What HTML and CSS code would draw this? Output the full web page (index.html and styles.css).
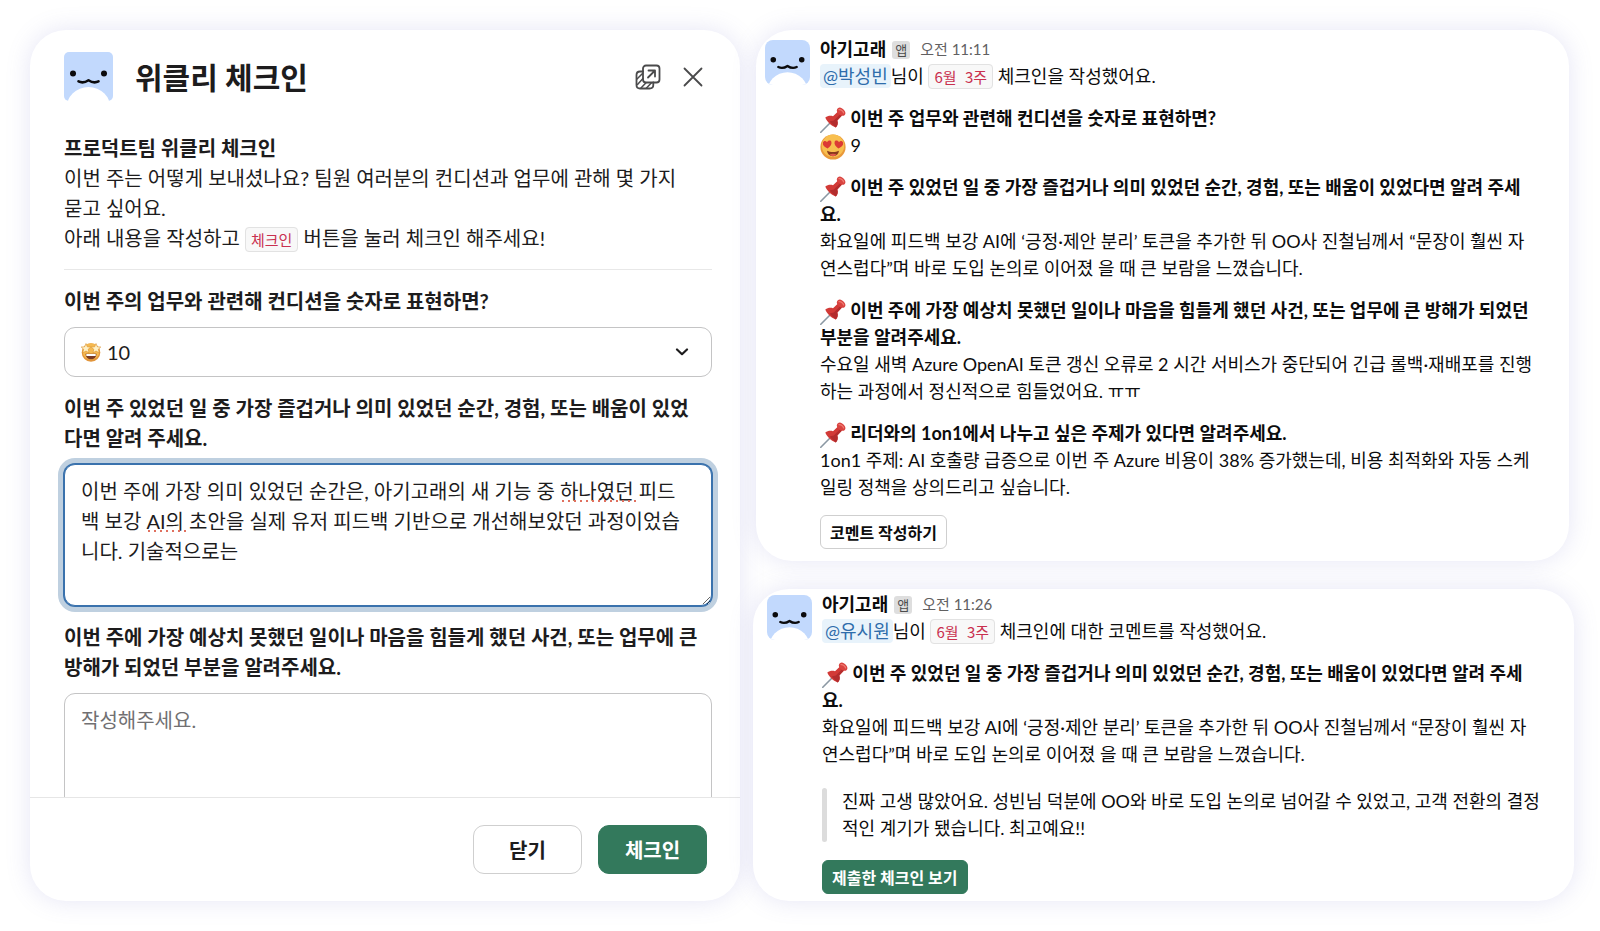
FILE: index.html
```html
<!DOCTYPE html>
<html lang="ko">
<head>
  <meta charset="UTF-8">
  <meta name="viewport" content="width=device-width, initial-scale=1.0">
  <title>위클리 체크인</title>
  <link rel="stylesheet" href="styles.css">
</head>
<body>

<!-- Shared drawings -->
<svg class="symbols" aria-hidden="true">
  <symbol id="whale" viewBox="0 0 49 49">
    <rect width="49" height="49" fill="#c2d9fd"/>
    <circle cx="9" cy="21.5" r="3" fill="#0b0b0d"/>
    <circle cx="40" cy="21.5" r="3" fill="#0b0b0d"/>
    <path d="M14.5 29.4C17 30.6 21 30.6 24.5 28.2C28 30.6 32 30.6 34.5 29.4" fill="none" stroke="#0b0b0d" stroke-width="2.6" stroke-linecap="round" stroke-linejoin="round"/>
    <circle cx="24.5" cy="57.5" r="22.5" fill="#fff"/>
  </symbol>
  <symbol id="pin" viewBox="0 0 26 26">
    <path d="M10.5 15.5L.8 25.2" stroke="#8b98a3" stroke-width="1.6" stroke-linecap="round"/>
    <path d="M5.3 10.6C7.6 8.6 10.6 8.4 13 9.2L18 4.6L22 8.6L17.3 13.4C18.2 16 17.8 18.6 15.8 20.6C11.8 19.2 7 15 5.3 10.6Z" fill="#d23a37"/>
    <path d="M9.5 14.5C11.5 16.8 13.8 18.6 15.8 20.6C17.8 18.6 18.2 16 17.3 13.4L22 8.6L20.4 7L13.8 13.4Z" fill="#b32c2d"/>
    <path d="M16.8 3.2C17.4 .8 19.6 -.1 21.8 1.2C24 2.4 25.6 4.4 25.4 6.4C25.1 8.7 23 9.4 21 8.4C18.8 7.2 16.6 5.2 16.8 3.2Z" fill="#d94340"/>
    <path d="M19 2.7C20.8 2.2 23.2 4.2 23.6 6" fill="none" stroke="#ef7a70" stroke-width="1.2" stroke-linecap="round"/>
  </symbol>
  <symbol id="heart-eyes" viewBox="0 0 26 26">
    <circle cx="13" cy="13" r="12.6" fill="#e9993a"/>
    <circle cx="13" cy="11.8" r="11.2" fill="#f8bf4f"/>
    <path d="M7.6 14.4C4.4 13 2.4 11 2.9 8.7C3.3 6.9 5.8 6.4 7 8.2C8 6.2 10.8 5.9 11.4 7.9C12 10.2 10.2 12.6 7.6 14.4Z" fill="#dc3a35"/>
    <path d="M18.4 14.4C21.6 13 23.6 11 23.1 8.7C22.7 6.9 20.2 6.4 19 8.2C18 6.2 15.2 5.9 14.6 7.9C14 10.2 15.8 12.6 18.4 14.4Z" fill="#dc3a35"/>
    <path d="M7 16.8C10.5 18.4 15.5 18.4 19 16.8C18.6 20.3 16.4 22.2 13 22.2C9.6 22.2 7.4 20.3 7 16.8Z" fill="#8a3a1c"/>
    <path d="M9.5 20.6C11.5 19.4 14.5 19.4 16.5 20.6C15.5 21.7 14.4 22.2 13 22.2C11.6 22.2 10.5 21.7 9.5 20.6Z" fill="#e2574c"/>
  </symbol>
</svg>

<main class="board">

  <!-- Check-in form -->
  <section class="card modal">
    <header class="modal-header">
      <svg class="modal-avatar"><use href="#whale"/></svg>
      <h1>위클리 체크인</h1>
      <button type="button" class="icon-button" aria-label="새 창에서 열기">
        <svg width="26" height="26" viewBox="0 0 26 26" fill="none" stroke="#4a4a4b" stroke-width="1.8" stroke-linecap="round" stroke-linejoin="round">
          <rect x="8" y="1.5" width="16.5" height="17" rx="3"/>
          <path d="M8 7.5H5C2.8 7.5 1.5 9 1.5 11V21C1.5 23.2 3 24.5 5 24.5H14.5C16.8 24.5 18.3 23 18.3 21V18.5"/>
          <path d="M13 13.5L19.5 7M13.5 6.5H20V12.5"/>
          <path d="M2 15L7.5 9.5M2.5 20.5L8 14.5M6 24L11 18.8M11.5 24L16.5 18.8" stroke-width="1.5"/>
        </svg>
      </button>
      <button type="button" class="icon-button close" aria-label="닫기">
        <svg width="20" height="20" viewBox="0 0 20 20" fill="none" stroke="#4a4a4b" stroke-width="1.8" stroke-linecap="round">
          <path d="M1.5 1.5L18.5 18.5M18.5 1.5L1.5 18.5"/>
        </svg>
      </button>
    </header>

    <form class="modal-body" id="checkin-form">
      <div class="intro">
        <strong>프로덕트팀 위클리 체크인</strong>
        <p>이번 주는 어떻게 보내셨나요? 팀원 여러분의 컨디션과 업무에 관해 몇 가지 묻고 싶어요.</p>
        <p>아래 내용을 작성하고 <code>체크인</code> 버튼을 눌러 체크인 해주세요!</p>
      </div>
      <hr>

      <div class="field">
        <label for="condition">이번 주의 업무와 관련해 컨디션을 숫자로 표현하면?</label>
        <div class="control">
          <select id="condition">
            <option>10</option>
            <option>9</option>
            <option>8</option>
          </select>
          <svg class="select-emoji" viewBox="0 0 20 20" aria-hidden="true">
            <circle cx="10" cy="10.5" r="9.3" fill="#e2953a"/>
            <circle cx="10" cy="9.5" r="8.3" fill="#f5b94f"/>
            <path d="M5 1.5L6.3 4.8L9.8 5L7.2 7.3L8 10.8L5 9L1.8 10.8L2.7 7.3L.2 5L3.6 4.8Z" fill="#fff0c4" stroke="#d9912f" stroke-width=".6"/>
            <path d="M15 1.5L16.4 4.8L19.8 5L17.3 7.3L18.2 10.8L15 9L12 10.8L12.8 7.3L10.2 5L13.7 4.8Z" fill="#fff0c4" stroke="#d9912f" stroke-width=".6"/>
            <path d="M4.5 11.8H15.5C15.3 15.5 13 17.3 10 17.3C7 17.3 4.7 15.5 4.5 11.8Z" fill="#7c3b22"/>
            <path d="M5.3 12H14.7V14H5.3Z" fill="#fff"/>
          </svg>
          <svg class="select-arrow" viewBox="0 0 14 8" aria-hidden="true">
            <path d="M2 1.5L7 6.2L12 1.5" fill="none" stroke="#1d1c1d" stroke-width="2.2" stroke-linecap="round" stroke-linejoin="round"/>
          </svg>
        </div>
      </div>

      <div class="field">
        <label for="moment">이번 주 있었던 일 중 가장 즐겁거나 의미 있었던 순간, 경험, 또는 배움이 있었다면 알려 주세요.</label>
        <div class="control">
          <textarea id="moment" class="focused" spellcheck="false">이번 주에 가장 의미 있었던 순간은, 아기고래의 새 기능 중 하나였던 피드백 보강 AI의 초안을 실제 유저 피드백 기반으로 개선해보았던 과정이었습니다. 기술적으로는</textarea>
          <span class="typo typo-first"></span>
          <span class="typo typo-second"></span>
        </div>
      </div>

      <div class="field">
        <label for="trouble">이번 주에 가장 예상치 못했던 일이나 마음을 힘들게 했던 사건, 또는 업무에 큰 방해가 되었던 부분을 알려주세요.</label>
        <div class="control">
          <textarea id="trouble" placeholder="작성해주세요."></textarea>
        </div>
      </div>
    </form>

    <footer class="modal-footer">
      <button type="button" class="button">닫기</button>
      <button type="submit" form="checkin-form" class="button primary">체크인</button>
    </footer>
  </section>

  <div class="messages">

    <!-- Submitted check-in -->
    <article class="card message first">
      <svg class="avatar"><use href="#whale"/></svg>
      <div class="content">
        <div class="meta"><b>아기고래</b><span class="badge">앱</span><time>오전 11:11</time></div>
        <p><a href="#" class="mention">@박성빈</a>님이 <code>6월&nbsp; 3주</code> 체크인을 작성했어요.</p>

        <div class="answer">
          <h2><svg class="emoji"><use href="#pin"/></svg> 이번 주 업무와 관련해 컨디션을 숫자로 표현하면?</h2>
          <p><svg class="emoji"><use href="#heart-eyes"/></svg> 9</p>
        </div>
        <div class="answer">
          <h2><svg class="emoji"><use href="#pin"/></svg> 이번 주 있었던 일 중 가장 즐겁거나 의미 있었던 순간, 경험, 또는 배움이 있었다면 알려 주세요.</h2>
          <p>화요일에 피드백 보강 AI에 ‘긍정·제안 분리’ 토큰을 추가한 뒤 OO사 진철님께서 “문장이 훨씬 자연스럽다”며 바로 도입 논의로 이어졌 을 때 큰 보람을 느꼈습니다.</p>
        </div>
        <div class="answer">
          <h2><svg class="emoji"><use href="#pin"/></svg> 이번 주에 가장 예상치 못했던 일이나 마음을 힘들게 했던 사건, 또는 업무에 큰 방해가 되었던 부분을 알려주세요.</h2>
          <p>수요일 새벽 Azure OpenAI 토큰 갱신 오류로 2 시간 서비스가 중단되어 긴급 롤백·재배포를 진행하는 과정에서 정신적으로 힘들었어요. ㅠㅠ</p>
        </div>
        <div class="answer">
          <h2><svg class="emoji"><use href="#pin"/></svg> 리더와의 1on1에서 나누고 싶은 주제가 있다면 알려주세요.</h2>
          <p>1on1 주제: AI 호출량 급증으로 이번 주 Azure 비용이 38% 증가했는데, 비용 최적화와 자동 스케일링 정책을 상의드리고 싶습니다.</p>
        </div>
        <button type="button" class="button small">코멘트 작성하기</button>
      </div>
    </article>

    <!-- Comment on the check-in -->
    <article class="card message second">
      <svg class="avatar"><use href="#whale"/></svg>
      <div class="content">
        <div class="meta"><b>아기고래</b><span class="badge">앱</span><time>오전 11:26</time></div>
        <p><a href="#" class="mention">@유시원</a>님이 <code>6월&nbsp; 3주</code> 체크인에 대한 코멘트를 작성했어요.</p>

        <div class="answer">
          <h2><svg class="emoji"><use href="#pin"/></svg> 이번 주 있었던 일 중 가장 즐겁거나 의미 있었던 순간, 경험, 또는 배움이 있었다면 알려 주세요.</h2>
          <p>화요일에 피드백 보강 AI에 ‘긍정·제안 분리’ 토큰을 추가한 뒤 OO사 진철님께서 “문장이 훨씬 자연스럽다”며 바로 도입 논의로 이어졌 을 때 큰 보람을 느꼈습니다.</p>
        </div>
        <blockquote>진짜 고생 많았어요. 성빈님 덕분에 OO와 바로 도입 논의로 넘어갈 수 있었고, 고객 전환의 결정적인 계기가 됐습니다. 최고예요!!</blockquote>
        <button type="button" class="button primary small">제출한 체크인 보기</button>
      </div>
    </article>

  </div>
</main>

</body>
</html>
```
FILE: styles.css
```css
* {
  margin: 0;
  padding: 0;
  box-sizing: border-box;
}

body {
  background-color: #fff;
  color: #1d1c1d;
  font-family: Lato, "Noto Sans CJK KR", sans-serif;
  font-size: 18px;
  line-height: 27px;
}

button,
select,
textarea {
  font-family: inherit;
  color: inherit;
}

.symbols {
  position: absolute;
  width: 0;
  height: 0;
}

/* Two columns: form on the left, messages on the right */
.board {
  display: grid;
  grid-template-columns: 710fr 821fr;
  gap: 13px;
  padding: 30px 26px 30px 30px;
}

.card {
  background-color: #fff;
  border-radius: 36px;
  box-shadow: 0 0 24px rgba(110, 110, 200, 0.18);
}

code {
  padding: 1px 5px;
  border: 1px solid #e2e2e2;
  border-radius: 4px;
  background-color: #f8f8f8;
  color: #c9304f;
  font-family: "Noto Sans CJK KR", sans-serif;
  font-size: 15px;
  line-height: 16px;
}

/* Form */
.modal {
  display: flex;
  flex-direction: column;
  height: calc(100vh - 60px);
  font-size: 20px;
  line-height: 30px;
}

.modal-header {
  display: flex;
  align-items: center;
  padding: 22px 37px 32px 34px;
}

.modal-avatar {
  width: 49px;
  height: 49px;
  border-radius: 5px;
}

.modal-header h1 {
  flex: 1;
  margin-left: 22px;
  font-size: 30px;
  line-height: 40px;
}

.icon-button {
  display: flex;
  border: none;
  background: none;
  cursor: pointer;
}

.close {
  margin-left: 22px;
}

.modal-body {
  flex: 1;
  min-height: 0;
  padding: 0 28px 0 34px;
  overflow-y: auto;
  scrollbar-width: none;
}

.intro {
  word-break: keep-all;
}

.intro strong {
  display: block;
}

.modal-body hr {
  margin: 16px 0;
  border: none;
  border-top: 1px solid #e8e8e8;
}

.field {
  margin-bottom: 16px;
}

.field label {
  display: block;
  margin-bottom: 11px;
  padding-right: 10px;
  font-weight: bold;
}

.control {
  position: relative;
}

.control select,
.control textarea {
  display: block;
  width: 100%;
  border: 1px solid #c4c4c5;
  border-radius: 11px;
  background-color: #fff;
  font-size: 20px;
  line-height: 30px;
}

.control select {
  height: 50px;
  padding: 0 42px;
  appearance: none;
}

.control textarea {
  height: 142px;
  padding: 11px 20px 11px 16px;
  outline: none;
}

.control textarea::placeholder {
  color: #717072;
}

.control .focused {
  border-color: #3a72ad;
  box-shadow: 0 0 0 1px #3a72ad, 0 0 0 6px #bfd0e0;
}

.select-emoji {
  position: absolute;
  left: 17px;
  top: 15px;
  width: 20px;
  height: 20px;
}

.select-arrow {
  position: absolute;
  right: 23px;
  top: 21px;
  width: 14px;
  height: 8px;
}

/* Spelling marks over the answer */
.typo {
  position: absolute;
  height: 2px;
  background: repeating-linear-gradient(90deg, #e0705f 0 2px, transparent 2px 6px);
}

.typo-first {
  left: 498px;
  top: 36px;
  width: 74px;
}

.typo-second {
  left: 84px;
  top: 66px;
  width: 38px;
}

.modal-footer {
  display: flex;
  justify-content: flex-end;
  gap: 16px;
  padding: 27px 33px 27px 34px;
  border-top: 1px solid #e6e6e6;
}

.button {
  min-width: 109px;
  height: 49px;
  border: 1px solid #cfcfcf;
  border-radius: 11px;
  background-color: #fff;
  font-size: 20px;
  font-weight: bold;
  cursor: pointer;
}

.primary {
  border-color: #33795c;
  background-color: #33795c;
  color: #fff;
}

.small {
  height: 34px;
  padding: 0 9px;
  border-radius: 6px;
  font-size: 16px;
}

/* Messages */
.messages {
  display: flex;
  flex-direction: column;
  gap: 28px;
}

.message {
  display: flex;
  align-items: flex-start;
  gap: 10px;
  color: #0c0c0d;
}

.first {
  margin: 0 5px 0 3px;
  padding: 6px 20px 12px 9px;
}

.second {
  flex: 1;
  padding: 2px 20px 5px 14px;
}

.avatar {
  flex: none;
  width: 45px;
  height: 45px;
  margin-top: 4px;
  border-radius: 8px;
}

.content {
  flex: 1;
}

.meta {
  display: flex;
  align-items: center;
}

.badge {
  margin: 0 10px 0 6px;
  padding: 0 3px;
  border-radius: 3px;
  background-color: #dedede;
  color: #4c4c4d;
  font-size: 13px;
  line-height: 18px;
}

.meta time {
  color: #616061;
  font-size: 15px;
}

.mention {
  padding: 1px 3px;
  border-radius: 4px;
  background-color: #e8f3fb;
  color: #2f6dab;
  text-decoration: none;
}

.answer {
  margin-top: 15px;
  padding-right: 14px;
}

.answer h2 {
  font-size: 18px;
  line-height: 27px;
}

.emoji {
  width: 26px;
  height: 26px;
  margin: -4px 0;
  vertical-align: middle;
}

.content > .button {
  display: block;
  margin-top: 14px;
}

blockquote {
  position: relative;
  margin: 20px 0 18px;
  padding-left: 20px;
}

blockquote::before {
  content: "";
  position: absolute;
  left: 0;
  top: 0;
  bottom: 0;
  width: 5px;
  border-radius: 3px;
  background-color: #dcdcdc;
}
```
